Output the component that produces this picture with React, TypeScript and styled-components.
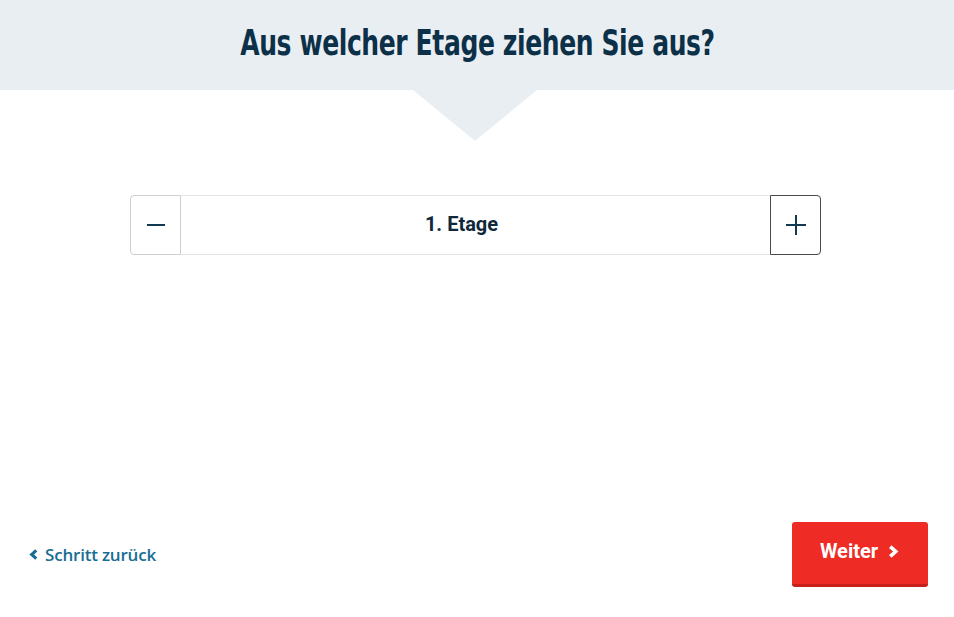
import styled, { createGlobalStyle } from "styled-components";

const GlobalStyle = createGlobalStyle`
    html, body {
        margin: 0;
        padding: 0;
        background: #ffffff;
    }
    * {
        box-sizing: border-box;
    }
`

const StyledPage = styled.div`
    display: flex;
    flex-direction: column;
    min-height: 100vh;
    font-family: Roboto, "Liberation Sans", sans-serif;
`
const StyledHeader = styled.header`
    position: relative;
    height: 90px;
    background-color: #e9eef2;
    display: flex;
    justify-content: center;
    align-items: flex-start;

    /* the little arrow pointing down at the question */
    &::after {
        content: "";
        position: absolute;
        left: 413px;
        top: 90px;
        border-left: 62px solid transparent;
        border-right: 62px solid transparent;
        border-top: 51px solid #e9eef2;
    }
`
const StyledTitle = styled.h1`
    margin: 23px 0 0;
    font-family: "DejaVu Sans Condensed", "DejaVu Sans", sans-serif;
    font-weight: bold;
    font-size: 35px;
    line-height: 40px;
    color: #0d3049;
    letter-spacing: -0.5px;
    transform: scaleX(0.795);
    white-space: nowrap;
`
const StyledStepper = styled.div`
    display: flex;
    width: 691px;
    height: 60px;
    margin: 105px 0 0 130px;
`
const StyledStepButton = styled.button<{ $side: "left" | "right" }>`
    width: 51px;
    height: 60px;
    padding: 0;
    display: flex;
    align-items: center;
    justify-content: center;
    background: #ffffff;
    cursor: pointer;
    border: 1px solid ${p => (p.$side === "right" ? "#4a4a4a" : "#cfcfcf")};
    border-radius: ${p => (p.$side === "left" ? "4px 0 0 4px" : "0 4px 4px 0")};
`
const StyledValue = styled.div`
    flex: 1;
    display: flex;
    align-items: center;
    justify-content: center;
    padding: 0 28px 3px 0;
    border-top: 1px solid #e3e3e3;
    border-bottom: 1px solid #e3e3e3;
    font-size: 20px;
    font-weight: 700;
    color: #10283a;
`
const StyledFooter = styled.footer`
    margin-top: auto;
    display: flex;
    justify-content: space-between;
    align-items: center;
    padding: 0 26px 30px 28px;
`
const StyledBackLink = styled.a`
    display: flex;
    align-items: center;
    gap: 6px;
    font-family: "Open Sans", sans-serif;
    font-size: 17px;
    font-weight: 600;
    letter-spacing: -0.2px;
    color: #176e92;
    text-decoration: none;
    cursor: pointer;
`
const StyledNextButton = styled.button`
    width: 136px;
    height: 65px;
    display: flex;
    align-items: center;
    justify-content: center;
    gap: 9px;
    padding: 0 0 4px 0;
    border: none;
    border-bottom: 3px solid #c71f1a;
    border-radius: 3px;
    background-color: #ee2b24;
    color: #ffffff;
    font-family: Roboto, sans-serif;
    font-size: 20px;
    font-weight: 700;
    cursor: pointer;
`

function Minus() {
    return (
        <svg width="20" height="20" viewBox="0 0 20 20">
            <path d="M1 10h18" stroke="#0f3a52" strokeWidth="2" />
        </svg>
    );
}

function Plus() {
    return (
        <svg width="22" height="22" viewBox="0 0 22 22">
            <path d="M1 11h20M11 1v20" stroke="#0f3a52" strokeWidth="2" />
        </svg>
    );
}

function Chevron({ dir, color, size }: { dir: "left" | "right"; color: string; size: number }) {
    const d = dir === "left" ? "M8 1.5L3 6L8 10.5" : "M2 1.5L7 6L2 10.5";
    return (
        <svg width={size} height={size} viewBox="0 0 10 12">
            <path d={d} stroke={color} strokeWidth="3.4" fill="none" />
        </svg>
    );
}

export default function App() {
    return (
        <StyledPage>
            <GlobalStyle />
            <StyledHeader>
                <StyledTitle>Aus welcher Etage ziehen Sie aus?</StyledTitle>
            </StyledHeader>
            <StyledStepper>
                <StyledStepButton $side="left" aria-label="weniger">
                    <Minus />
                </StyledStepButton>
                <StyledValue>1. Etage</StyledValue>
                <StyledStepButton $side="right" aria-label="mehr">
                    <Plus />
                </StyledStepButton>
            </StyledStepper>
            <StyledFooter>
                <StyledBackLink>
                    <Chevron dir="left" color="#176e92" size={11} />
                    Schritt zurück
                </StyledBackLink>
                <StyledNextButton>
                    Weiter
                    <Chevron dir="right" color="#ffffff" size={13} />
                </StyledNextButton>
            </StyledFooter>
        </StyledPage>
    );
}
